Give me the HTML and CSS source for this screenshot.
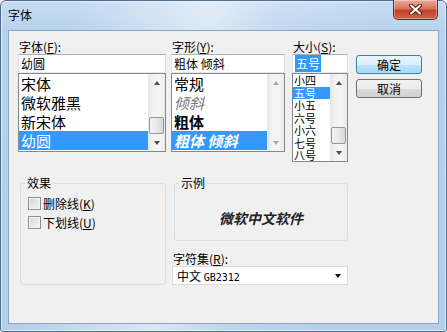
FILE: index.html
```html
<!DOCTYPE html>
<html lang="zh-CN">
  <head>
    <meta charset="UTF-8" />
    <title>字体</title>
    <link rel="stylesheet" href="styles.css">
  </head>
  <body>
    <div class="window">
      <div class="titlebar">
        <span class="title">字体</span>
        <div class="closeBtn">
          <svg width="13" height="11" viewBox="0 0 13 11">
            <path d="M2 1.5 L11 9.5 M11 1.5 L2 9.5" stroke="#5b1c12" stroke-width="4" stroke-linecap="round" />
            <path d="M2 1.5 L11 9.5 M11 1.5 L2 9.5" stroke="#fff" stroke-width="2" stroke-linecap="round" />
          </svg>
        </div>
      </div>

      <div class="client">
        <div class="topRow">
          <!-- 字体 -->
          <div class="col fontCol">
            <div class="label">字体(<u>F</u>):</div>
            <div class="textbox">幼圆</div>
            <div class="listbox">
              <ul class="items bigItems">
                <li>宋体</li>
                <li>微软雅黑</li>
                <li>新宋体</li>
                <li class="selected">幼圆</li>
              </ul>
              <div class="scrollbar">
                <div class="sbBtn up"></div>
                <div class="sbTrack"><div class="thumb"></div></div>
                <div class="sbBtn down"></div>
              </div>
            </div>
          </div>

          <!-- 字形 -->
          <div class="col styleCol">
            <div class="label">字形(<u>Y</u>):</div>
            <div class="textbox">粗体 倾斜</div>
            <div class="listbox">
              <ul class="items bigItems">
                <li>常规</li>
                <li class="italic">倾斜</li>
                <li class="bold">粗体</li>
                <li class="selected bold italicSel">粗体 倾斜</li>
              </ul>
              <div class="scrollbar disabled">
                <div class="sbBtn up"></div>
                <div class="sbTrack"></div>
                <div class="sbBtn down"></div>
              </div>
            </div>
          </div>

          <!-- 大小 -->
          <div class="col sizeCol">
            <div class="label">大小(<u>S</u>):</div>
            <div class="textbox"><span class="hilite">五号</span></div>
            <div class="listbox sizeList">
              <ul class="items smallItems">
                <li>小四</li>
                <li class="selected">五号</li>
                <li>小五</li>
                <li>六号</li>
                <li>小六</li>
                <li>七号</li>
                <li>八号</li>
              </ul>
              <div class="scrollbar">
                <div class="sbBtn up"></div>
                <div class="sbTrack"><div class="thumb"></div></div>
                <div class="sbBtn down"></div>
              </div>
            </div>
          </div>

          <div class="col btnCol">
            <div class="button default">确定</div>
            <div class="button">取消</div>
          </div>
        </div>

        <div class="bottomRow">
          <fieldset class="group effects">
            <legend>效果</legend>
            <div class="groupBody">
              <div class="check"><span class="box"></span>删除线(<u>K</u>)</div>
              <div class="check"><span class="box"></span>下划线(<u>U</u>)</div>
            </div>
          </fieldset>

          <div class="rightCol">
            <fieldset class="group sample">
              <legend>示例</legend>
              <div class="sampleText">微软中文软件</div>
            </fieldset>
            <div class="label">字符集(<u>R</u>):</div>
            <div class="combo">
              <span>中文 <span class="latin">GB2312</span></span>
              <span class="comboArrow"></span>
            </div>
          </div>
        </div>
      </div>
    </div>
  </body>
</html>
```

FILE: styles.css
```css
* {
  box-sizing: border-box;
}
body,
ul,
li,
fieldset,
legend {
  margin: 0px;
  padding: 0px;
}
li {
  list-style: none;
}
body {
  background-color: #fff;
  font-family: "Noto Sans CJK SC", sans-serif;
  font-size: 12px;
  color: #000;
}
u {
  text-decoration: underline;
}

/* window frame */
.window {
  display: flex;
  flex-direction: column;
  width: 447px;
  height: 332px;
  padding: 0 7px 7px;
  border: 1px solid #4d6c93;
  border-radius: 6px 6px 3px 3px;
  background: linear-gradient(100deg, rgba(255, 255, 255, 0) 15%, rgba(255, 255, 255, 0.5) 42%, rgba(255, 255, 255, 0.15) 55%, rgba(255, 255, 255, 0) 75%),
    linear-gradient(180deg, #c6dcf2 0px, #b9d2ec 30px, #b6cfe9 100%);
  box-shadow: inset 0 0 0 1px rgba(255, 255, 255, 0.55);
}
.titlebar {
  display: flex;
  justify-content: space-between;
  align-items: flex-start;
  height: 29px;
}
.title {
  margin-top: 7px;
  line-height: 14px;
}
.closeBtn {
  display: flex;
  align-items: center;
  justify-content: center;
  width: 45px;
  height: 20px;
  margin-top: -1px;
  margin-right: 1px;
  border: 1px solid #6b2a1f;
  border-top: none;
  border-radius: 0 0 5px 5px;
  background: linear-gradient(180deg, #e9a99a 0%, #d9745e 45%, #c4412a 55%, #d0624a 100%);
  box-shadow: inset 0 0 0 1px rgba(255, 255, 255, 0.35);
}

.client {
  flex: 1;
  padding: 8px 0 0 9px;
  border: 1px solid #8ba4c3;
  background-color: #f0f0f0;
}

/* top row */
.topRow {
  display: flex;
  align-items: flex-start;
}
.fontCol {
  width: 148px;
  margin-right: 5px;
}
.styleCol {
  width: 114px;
  margin-right: 7px;
}
.sizeCol {
  width: 56px;
  margin-right: 8px;
}
.btnCol {
  width: 66px;
  padding-top: 16px;
}
.label {
  height: 15px;
  line-height: 15px;
  padding-left: 1px;
}
.textbox {
  height: 19px;
  padding-left: 2px;
  line-height: 17px;
  border: 1px solid;
  border-color: #abadb3 #dbdfe6 #e3e9ef #e2e3ea;
  background-color: #fff;
  white-space: nowrap;
}
.hilite {
  padding: 0 1px;
  background-color: #3399ff;
  color: #fff;
}
.listbox {
  display: flex;
  height: 79px;
  border: 1px solid #828790;
  background-color: #fff;
}
.sizeList {
  height: 89px;
}
.items {
  flex: 1;
  overflow: hidden;
}
.bigItems li {
  height: 19px;
  padding-left: 2px;
  line-height: 19px;
  font-size: 15px;
  white-space: nowrap;
}
.smallItems li {
  height: 12.5px;
  padding-left: 1px;
  line-height: 12.5px;
  font-size: 11px;
  white-space: nowrap;
}
.items .selected {
  background-color: #3399ff;
  color: #fff;
}
.items .italic {
  font-style: italic;
  color: #777;
}
.items .bold {
  font-weight: bold;
}
.items .italicSel {
  font-style: italic;
}

/* scrollbar */
.scrollbar {
  display: flex;
  flex-direction: column;
  width: 17px;
  background: linear-gradient(90deg, #e6e6e6, #f3f3f3 30%, #f5f5f5 70%, #ebebeb);
}
.sbBtn {
  display: flex;
  align-items: center;
  justify-content: center;
  height: 17px;
}
.sbBtn::before {
  content: "";
  width: 0;
  height: 0;
  border-left: 3.5px solid transparent;
  border-right: 3.5px solid transparent;
}
.up::before {
  border-bottom: 4px solid #4f4f4f;
}
.down::before {
  border-top: 4px solid #4f4f4f;
}
.disabled .up::before {
  border-bottom-color: #a8a8a8;
}
.disabled .down::before {
  border-top-color: #a8a8a8;
}
.sbTrack {
  flex: 1;
  display: flex;
  flex-direction: column;
  justify-content: flex-end;
}
.thumb {
  height: 17px;
  margin: 0 1px;
  border: 1px solid #979797;
  border-radius: 2px;
  background: linear-gradient(90deg, #f4f4f4, #e9e9e9 50%, #d8d8d8);
}

/* buttons */
.button {
  height: 19px;
  margin-bottom: 5px;
  line-height: 17px;
  text-align: center;
  border: 1px solid #707070;
  border-radius: 3px;
  background: linear-gradient(180deg, #f2f2f2 0%, #ebebeb 50%, #dddddd 51%, #cfcfcf 100%);
}
.button.default {
  border-color: #3c7fb1;
  background: linear-gradient(180deg, #eaf6fd 0%, #d9f0fc 50%, #bee6fd 51%, #a7d9f5 100%);
}

/* bottom row */
.bottomRow {
  display: flex;
  margin-top: 15px;
  padding-left: 2px;
}
.group {
  border: 1px solid #d5dfe5;
  border-radius: 3px;
  min-width: 0;
}
.group legend {
  margin-left: 4px;
  padding: 0 2px;
  line-height: 12px;
}
.effects {
  width: 146px;
  height: 108px;
}
.groupBody {
  padding: 5px 0 0 7px;
}
.check {
  display: flex;
  align-items: center;
  height: 19px;
}
.box {
  width: 13px;
  height: 13px;
  margin-right: 2px;
  border: 1px solid #8e8f8f;
  background: linear-gradient(135deg, #d2d5d9, #f7f7f7);
  box-shadow: inset 0 0 0 1px #f4f4f4;
}
.rightCol {
  width: 176px;
  margin-left: 6px;
}
.sample {
  width: 174px;
  height: 64px;
  margin-left: 2px;
}
.sampleText {
  margin-top: 21px;
  line-height: 16px;
  font-size: 14px;
  font-weight: bold;
  font-style: italic;
  text-align: center;
  color: #222;
}
.rightCol .label {
  margin-top: 10px;
}
.combo {
  display: flex;
  justify-content: space-between;
  align-items: center;
  height: 19px;
  padding: 0 6px 0 4px;
  border: 1px solid #dcdcdc;
  background-color: #fff;
}
.latin {
  font-family: "DejaVu Sans Mono", monospace;
  font-size: 10px;
}
.comboArrow {
  width: 0;
  height: 0;
  border-left: 3.5px solid transparent;
  border-right: 3.5px solid transparent;
  border-top: 4px solid #000;
}
```
